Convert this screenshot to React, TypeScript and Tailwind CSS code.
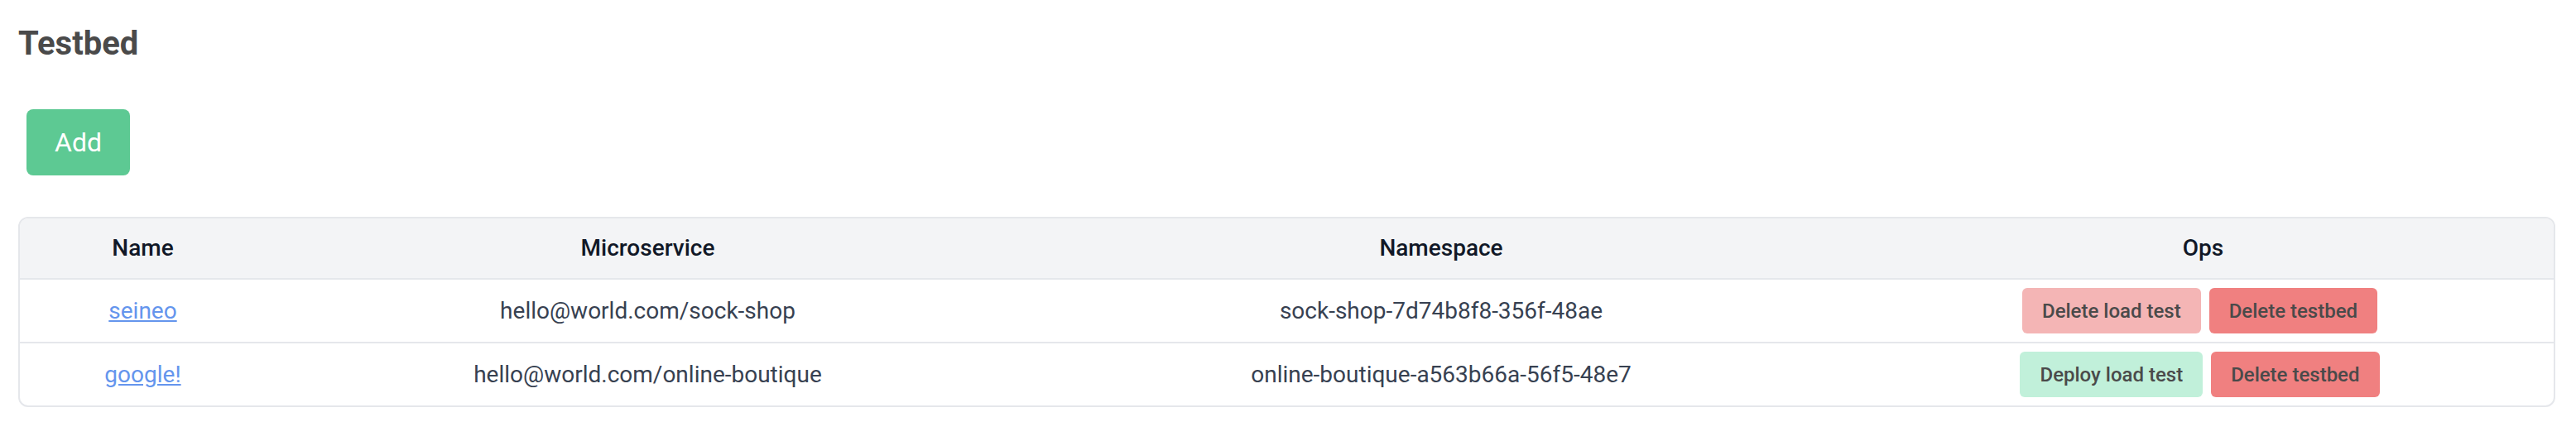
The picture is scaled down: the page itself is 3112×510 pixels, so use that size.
import React from "react";

const rows = [
  {
    name: "seineo",
    micro: "hello@world.com/sock-shop",
    ns: "sock-shop-7d74b8f8-356f-48ae",
    deployed: true,
  },
  {
    name: "google!",
    micro: "hello@world.com/online-boutique",
    ns: "online-boutique-a563b66a-56f5-48e7",
    deployed: false,
  },
];

export default function App() {
  return (
    <div
      className="w-[3112px] h-[510px] bg-white pl-[22px] pr-[25px] pt-[29px]"
      style={{ fontFamily: "Roboto, 'Noto Sans', sans-serif" }}
    >
      <h1 className="text-[40px] leading-[48px] font-bold text-[#4a4a4a]">Testbed</h1>
      <div className="mt-[55px] pl-[10px]">
        <button className="h-[80px] w-[125px] rounded-[8px] bg-[#5dc993] text-white text-[32px] leading-none font-normal">
          Add
        </button>
      </div>
      <div className="mt-[50px] rounded-[12px] border-2 border-[#e5e7eb] overflow-hidden">
        <div className="grid grid-cols-[297px_923px_994px_1fr] h-[74px] bg-[#f3f4f6] border-b-2 border-[#e5e7eb] items-center text-[28px] font-medium text-[#111827]">
          <div className="text-center">Name</div>
          <div className="text-center">Microservice</div>
          <div className="text-center">Namespace</div>
          <div className="text-center">Ops</div>
        </div>
        {rows.map((r, i) => (
          <div
            key={r.name}
            className={
              i === 0
                ? "grid grid-cols-[297px_923px_994px_1fr] h-[77px] items-center border-b-2 border-[#e5e7eb] text-[28px] text-[#374151]"
                : "grid grid-cols-[297px_923px_994px_1fr] h-[75px] items-center text-[28px] text-[#374151]"
            }
          >
            <div className="text-center">
              <a href="#" className="text-[#6495ed] underline">
                {r.name}
              </a>
            </div>
            <div className="text-center">{r.micro}</div>
            <div className="text-center">{r.ns}</div>
            <div className="flex justify-center gap-[10px] pr-[8px]">
              {r.deployed ? (
                <button className="h-[55px] px-[24px] rounded-[6px] bg-[#f4b5b5] text-[24px] font-medium text-[#4a4a4a]">
                  Delete load test
                </button>
              ) : (
                <button className="h-[55px] px-[24px] rounded-[6px] bg-[#c1f0da] text-[24px] font-medium text-[#4a4a4a]">
                  Deploy load test
                </button>
              )}
              <button className="h-[55px] px-[24px] rounded-[6px] bg-[#f08080] text-[24px] font-medium text-[#4a4a4a]">
                Delete testbed
              </button>
            </div>
          </div>
        ))}
      </div>
    </div>
  );
}
